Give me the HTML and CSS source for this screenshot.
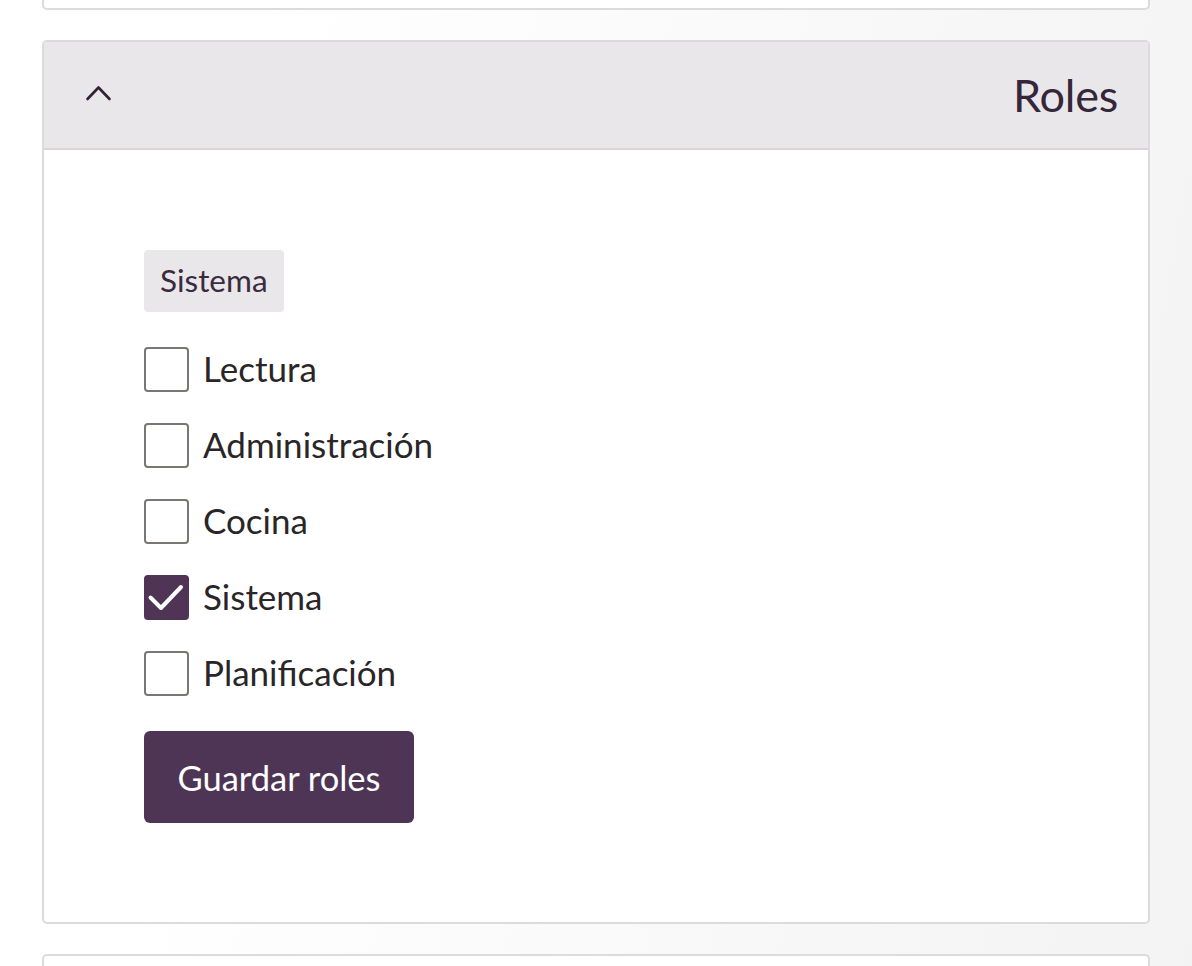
FILE: index.html
```html
<!DOCTYPE html>
<html lang="es">
<head>
    <meta charset="UTF-8">
    <meta name="viewport" content="width=device-width, initial-scale=1.0">
    <title>Usuario - Roles</title>
    <link rel="stylesheet" href="styles.css">
</head>
<body>
    <div class="page">
        <div class="card card-prev"></div>

        <section class="card">
            <header class="card-header">
                <svg class="chevron" width="28" height="18" viewBox="0 0 28 18">
                    <polyline points="2.5,15 13.5,3.5 24.5,15" fill="none" stroke="#2f2233" stroke-width="2.6" stroke-linecap="round" stroke-linejoin="round"/>
                </svg>
                <h2 class="card-title">Roles</h2>
            </header>

            <div class="card-body">
                <form class="roles-form">
                    <span class="badge">Sistema</span>

                    <ul class="role-list">
                        <li class="role">
                            <span class="box"></span>
                            <span class="role-name">Lectura</span>
                        </li>
                        <li class="role">
                            <span class="box"></span>
                            <span class="role-name">Administración</span>
                        </li>
                        <li class="role">
                            <span class="box"></span>
                            <span class="role-name">Cocina</span>
                        </li>
                        <li class="role">
                            <span class="box checked">
                                <svg width="45" height="45" viewBox="0 0 45 45">
                                    <polyline points="6.5,22.5 17,33 37,12" fill="none" stroke="#ffffff" stroke-width="4" stroke-linecap="round" stroke-linejoin="round"/>
                                </svg>
                            </span>
                            <span class="role-name">Sistema</span>
                        </li>
                        <li class="role">
                            <span class="box"></span>
                            <span class="role-name">Planificación</span>
                        </li>
                    </ul>

                    <button type="button" class="button-save">Guardar roles</button>
                </form>
            </div>
        </section>

        <div class="card card-next"></div>
    </div>
</body>
</html>
```

FILE: styles.css
```css
    *{
        margin: 0;
        padding: 0;
        box-sizing: border-box;
        font-family: Lato, "Open Sans", sans-serif;
    }

    body{
        background: linear-gradient(100deg, #ffffff 0%, #ffffff 20%, #f3f3f3 100%);
        height: 966px;
        overflow: hidden;
    }

    .page{
        width: 1108px;
        margin-left: 42px;
        display: flex;
        flex-direction: column;
        gap: 30px;
    }

    .card{
        background-color: #ffffff;
        border: 2px solid #dcdbdc;
        border-radius: 5px;
    }

    .card-prev{
        height: 10px;
        border-top: none;
        border-top-left-radius: 0;
        border-top-right-radius: 0;
    }

    .card-next{
        height: 12px;
        border-bottom: none;
        border-bottom-left-radius: 0;
        border-bottom-right-radius: 0;
    }

    .card-header{
        background-color: #e9e7ea;
        border-bottom: 2px solid #d6d5d7;
        height: 108px;
        display: flex;
        align-items: center;
        justify-content: space-between;
        padding: 0 30px 0 41px;
    }

    .chevron{
        display: block;
        margin-top: -4px;
    }

    .card-title{
        font-weight: 400;
        font-size: 45px;
        color: #35263a;
        letter-spacing: -0.2px;
    }

    .card-body{
        padding: 100px 100px 99px 100px;
    }

    .roles-form{
        display: flex;
        flex-direction: column;
        align-items: flex-start;
    }

    .badge{
        display: inline-block;
        background-color: #e9e7ea;
        color: #3a2b3f;
        font-size: 31.5px;
        height: 62px;
        line-height: 60px;
        padding: 0 16px;
        border-radius: 4px;
    }

    .role-list{
        list-style: none;
        margin-top: 35px;
        display: flex;
        flex-direction: column;
        gap: 31px;
    }

    .role{
        display: flex;
        align-items: center;
        height: 45px;
        gap: 14px;
    }

    .box{
        width: 45px;
        height: 45px;
        border: 2px solid #7a7673;
        border-radius: 4px;
        background-color: #ffffff;
        flex-shrink: 0;
    }

    .box.checked{
        background-color: #4f3456;
        border-color: #4f3456;
        position: relative;
    }

    .box.checked svg{
        position: absolute;
        left: -2px;
        top: -2px;
    }

    .role-name{
        font-size: 35px;
        color: #2a2527;
        margin-top: -3px;
    }

    .button-save{
        margin-top: 35px;
        background-color: #4f3555;
        color: #ffffff;
        border: none;
        border-radius: 6px;
        width: 270px;
        height: 92px;
        font-size: 34.5px;
        cursor: pointer;
    }

    .button-save:hover{
        opacity: 0.9;
    }
```
